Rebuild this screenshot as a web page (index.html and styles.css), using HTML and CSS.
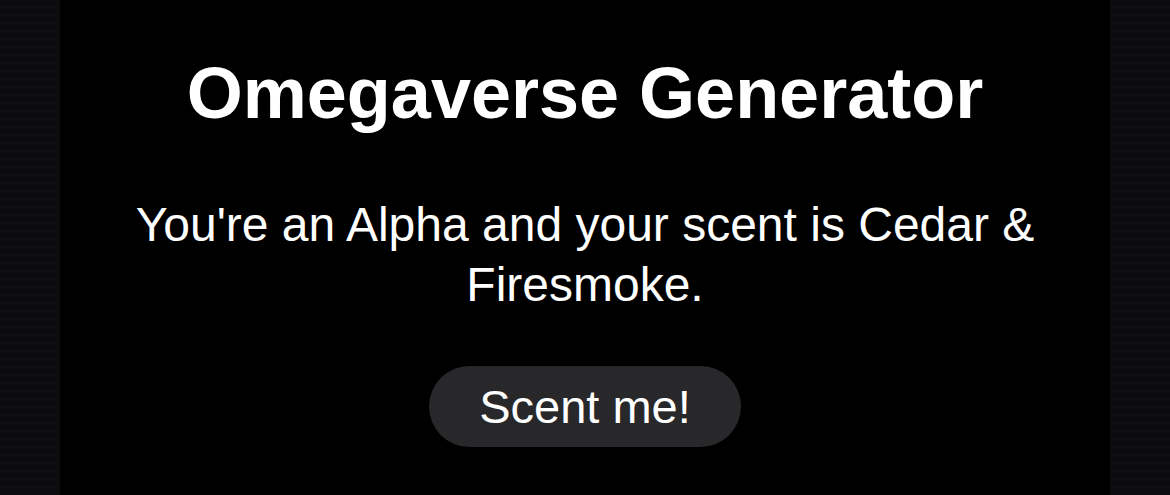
FILE: index.html
```html
<!DOCTYPE html>
<html lang="en">
<head>
    <meta charset="UTF-8">
    <meta name="viewport" content="width=device-width, initial-scale=1.0">
    <title>Omegaverse Generator</title>
    <link rel="stylesheet" href="styles.css">
</head>
<body>
    <div class="page">
        <div class="gutter"></div>
        <main class="card">
            <h1>Omegaverse Generator</h1>
            <p id="result" class="result">You're an Alpha and your scent is Cedar &amp; Firesmoke.</p>
            <button id="scentBtn" class="scent-btn">Scent me!</button>
        </main>
        <div class="gutter"></div>
    </div>
    <script>
        // Pick a random secondary gender and scent
        const genders = ['an Alpha', 'a Beta', 'an Omega'];
        const scents = ['Cedar & Firesmoke', 'Vanilla & Rain', 'Pine & Leather', 'Honey & Citrus', 'Sea Salt & Mint'];

        document.getElementById('scentBtn').addEventListener('click', function () {
            const g = genders[Math.floor(Math.random() * genders.length)];
            const s = scents[Math.floor(Math.random() * scents.length)];
            document.getElementById('result').textContent = `You're ${g} and your scent is ${s}.`;
        });
    </script>
</body>
</html>
```

FILE: styles.css
```css
body {
    margin: 0;
    padding: 0;
    background-color: #000;
    font-family: "Liberation Sans", Arial, sans-serif;
    color: #fff;
}
.page {
    display: flex;
    min-height: 495px;
}
.gutter {
    width: 60px;
    flex-shrink: 0;
    background-color: #0c0c0f;
    background-image: repeating-linear-gradient(
        to bottom,
        #0c0c0f 0,
        #0c0c0f 7px,
        #101014 7px,
        #101014 8px
    );
}
.card {
    flex: 1;
    background-color: #000;
    text-align: center;
    padding: 52px 40px 0;
}
h1 {
    margin: 0;
    font-size: 72px;
    font-weight: bold;
}
.result {
    margin: 61px 0 0;
    font-size: 48px;
    line-height: 60px;
}
.scent-btn {
    margin-top: 51px;
    font-family: inherit;
    font-size: 47px;
    color: #fff;
    background-color: #28282b;
    border: none;
    border-radius: 41px;
    height: 81px;
    padding: 0 50px;
}
```
